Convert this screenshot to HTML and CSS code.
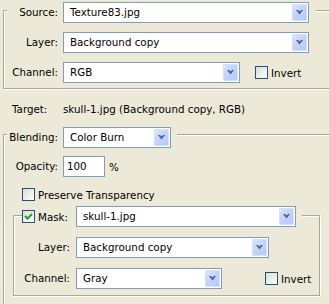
FILE: index.html
```html
<!DOCTYPE html>
<html lang="en">
<head>
    <meta charset="UTF-8">
    <title>Apply Image</title>
    <link rel="stylesheet" href="styles.css">
</head>
<body>
    <div class="dialog">
        <!-- Source group -->
        <div class="group">
            <div class="group-head">
                <span class="corner corner-left"></span>
                <label class="field-label head-label">Source:</label>
                <div class="combo combo-wide">
                    <span class="combo-text">Texture83.jpg</span>
                    <span class="combo-btn"><svg width="7" height="5" viewBox="0 0 7 5"><polygon points="0,0 2,0 3.5,1.5 5,0 7,0 3.5,4.5" /></svg></span>
                </div>
                <span class="rule"></span>
            </div>
            <div class="group-body">
                <div class="row">
                    <label class="field-label">Layer:</label>
                    <div class="combo combo-wide">
                        <span class="combo-text">Background copy</span>
                        <span class="combo-btn"><svg width="7" height="5" viewBox="0 0 7 5"><polygon points="0,0 2,0 3.5,1.5 5,0 7,0 3.5,4.5" /></svg></span>
                    </div>
                </div>
                <div class="row">
                    <label class="field-label">Channel:</label>
                    <div class="combo combo-channel">
                        <span class="combo-text">RGB</span>
                        <span class="combo-btn"><svg width="7" height="5" viewBox="0 0 7 5"><polygon points="0,0 2,0 3.5,1.5 5,0 7,0 3.5,4.5" /></svg></span>
                    </div>
                    <label class="check check-invert"><span class="box"></span>Invert</label>
                </div>
            </div>
        </div>

        <div class="target">
            <span class="target-label">Target:</span>
            <span>skull-1.jpg (Background copy, RGB)</span>
        </div>

        <!-- Blending group -->
        <div class="group group-blend">
            <div class="group-head">
                <span class="corner corner-left corner-blend"></span>
                <label class="field-label head-label">Blending:</label>
                <div class="combo combo-blend">
                    <span class="combo-text">Color Burn</span>
                    <span class="combo-btn"><svg width="7" height="5" viewBox="0 0 7 5"><polygon points="0,0 2,0 3.5,1.5 5,0 7,0 3.5,4.5" /></svg></span>
                </div>
                <span class="rule rule-blend"></span>
            </div>
            <div class="group-body blend-body">
                <div class="row">
                    <label class="field-label">Opacity:</label>
                    <div class="text-input">100</div>
                    <span class="unit">%</span>
                </div>
                <label class="check check-preserve"><span class="box"></span>Preserve Transparency</label>

                <!-- Mask group -->
                <div class="mask">
                    <div class="group-head">
                        <span class="corner corner-left mask-corner"></span>
                        <label class="check mask-check">
                            <span class="box checked"><svg width="11" height="11" viewBox="0 0 11 11"><polyline points="2,5 4.5,7.5 9,3" /></svg></span>Mask:
                        </label>
                        <div class="combo combo-mask">
                            <span class="combo-text">skull-1.jpg</span>
                            <span class="combo-btn"><svg width="7" height="5" viewBox="0 0 7 5"><polygon points="0,0 2,0 3.5,1.5 5,0 7,0 3.5,4.5" /></svg></span>
                        </div>
                        <span class="corner corner-right"></span>
                    </div>
                    <div class="mask-body">
                        <div class="row">
                            <label class="field-label">Layer:</label>
                            <div class="combo combo-mask-layer">
                                <span class="combo-text">Background copy</span>
                                <span class="combo-btn"><svg width="7" height="5" viewBox="0 0 7 5"><polygon points="0,0 2,0 3.5,1.5 5,0 7,0 3.5,4.5" /></svg></span>
                            </div>
                        </div>
                        <div class="row">
                            <label class="field-label">Channel:</label>
                            <div class="combo combo-mask-channel">
                                <span class="combo-text">Gray</span>
                                <span class="combo-btn"><svg width="7" height="5" viewBox="0 0 7 5"><polygon points="0,0 2,0 3.5,1.5 5,0 7,0 3.5,4.5" /></svg></span>
                            </div>
                            <label class="check mask-invert"><span class="box"></span>Invert</label>
                        </div>
                    </div>
                </div>
            </div>
        </div>
    </div>
</body>
</html>
```

FILE: styles.css
```css
* {
    margin: 0;
    padding: 0;
    box-sizing: border-box;
}

body {
    font-family: 'DejaVu Sans', Tahoma, sans-serif;
    font-size: 10.3px;
    color: #000;
    background: #ece9d8;
    overflow: hidden;
}

.dialog {
    padding-top: 2px;
}

/* Etched group boxes */
.group {
    margin-left: 3px;
}

.group-blend {
    margin-top: 11px;
}

.group-head {
    display: flex;
    height: 21px;
}

.corner {
    border-top: 1px solid #aca899;
}

.corner-left {
    width: 4px;
    margin-top: 8px;
    border-left: 1px solid #aca899;
    box-shadow: inset 1px 1px 0 #fff;
}

.corner-blend {
    margin-top: 7px;
}

.rule {
    flex: 1;
    height: 2px;
    margin-top: 8px;
    margin-left: 7px;
    border-top: 1px solid #aca899;
    box-shadow: inset 0 1px 0 #fff;
}

.rule-blend {
    margin-top: 7px;
    margin-left: 6px;
}

.group-body {
    display: flex;
    flex-direction: column;
    gap: 9px;
    padding: 9px 0 5px;
    border-left: 1px solid #aca899;
    border-bottom: 1px solid #aca899;
    box-shadow: inset 1px 0 0 #fff, 0 1px 0 #fff;
}

.row {
    display: flex;
    align-items: center;
    height: 21px;
}

.field-label {
    width: 54px;
    margin-right: 5px;
    text-align: right;
    line-height: 21px;
}

.head-label {
    width: 51px;
}

/* Combo boxes */
.combo {
    display: flex;
    height: 21px;
    background: #fff;
    border: 1px solid #7f9db9;
    padding: 1px;
}

.combo-text {
    flex: 1;
    padding-left: 5px;
    line-height: 17px;
    white-space: nowrap;
    overflow: hidden;
}

.combo-btn {
    width: 15px;
    display: flex;
    align-items: center;
    justify-content: center;
    background: linear-gradient(135deg, #dbe5fd 0%, #c3d3fb 45%, #b6c9f7 100%);
    border: 1px solid #d5e0fc;
    border-radius: 1px;
}

.combo-btn svg {
    fill: #4d6185;
}

.combo-wide {
    width: 246px;
}

.combo-channel {
    width: 177px;
}

.combo-blend {
    width: 108px;
}

.combo-mask {
    width: 220px;
}

.combo-mask-layer {
    width: 193px;
}

.combo-mask-channel {
    width: 146px;
}

/* Check boxes */
.check {
    display: flex;
    align-items: center;
    white-space: nowrap;
}

.box {
    width: 13px;
    height: 13px;
    margin-right: 3px;
    border: 1px solid #1c5180;
    background: linear-gradient(135deg, #dcdcd7 0%, #f4f4f0 70%, #fff 100%);
}

.box svg {
    display: block;
    fill: none;
    stroke: #21a121;
    stroke-width: 2;
}

.check-invert {
    margin-left: 15px;
}

.target {
    display: flex;
    margin-top: 13px;
    padding-left: 12px;
    line-height: 14px;
}

.target-label {
    width: 51px;
}

/* Blending */
.blend-body {
    gap: 0;
    padding: 8px 0 20px;
    border-bottom: none;
    box-shadow: inset 1px 0 0 #fff;
}

.text-input {
    width: 42px;
    height: 21px;
    padding-left: 3px;
    line-height: 19px;
    background: #fff;
    border: 1px solid #7f9db9;
}

.unit {
    margin-left: 4px;
}

.check-preserve {
    height: 13px;
    margin: 11px 0 0 18px;
}

/* Mask group */
.mask {
    width: 307px;
    margin: 5px 0 0 9px;
}

.mask-corner {
    width: 9px;
    margin-top: 9px;
}

.mask-check {
    width: 54px;
    height: 21px;
}

.corner-right {
    flex: 1;
    margin-top: 9px;
    margin-left: 6px;
    border-right: 1px solid #aca899;
    box-shadow: inset 0 1px 0 #fff, 1px 0 0 #fff;
}

.mask-body {
    display: flex;
    flex-direction: column;
    gap: 10px;
    padding: 10px 0 6px;
    border: 1px solid #aca899;
    border-top: none;
    box-shadow: inset 1px 0 0 #fff, 1px 0 0 #fff, 0 1px 0 #fff;
}

.mask-body .field-label {
    width: 56px;
    margin-right: 6px;
}

.mask-invert {
    margin-left: 43px;
}
```
